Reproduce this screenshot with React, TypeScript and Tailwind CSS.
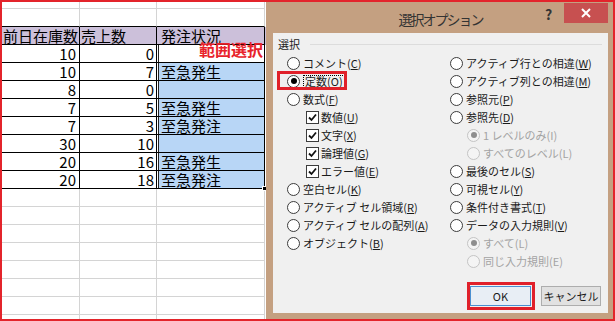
import React from "react";

const FONT = "font-['Noto_Sans_CJK_JP','Noto_Sans',sans-serif]";

type Row = { a: string; b: string; c: string; sel: boolean };

const rows: Row[] = [
  { a: "10", b: "0", c: "", sel: false },
  { a: "10", b: "7", c: "至急発生", sel: true },
  { a: "8", b: "0", c: "", sel: true },
  { a: "7", b: "5", c: "至急発生", sel: true },
  { a: "7", b: "3", c: "至急発注", sel: true },
  { a: "30", b: "10", c: "", sel: true },
  { a: "20", b: "16", c: "至急発生", sel: true },
  { a: "20", b: "18", c: "至急発注", sel: true },
];

function GrayRow({ h = "h-[18px]", dark = false }: { h?: string; dark?: boolean }) {
  const b = dark ? "border-b-black" : "border-b-[#d4d4d4]";
  return (
    <div className={`flex ${h} shrink-0`}>
      <div className={`w-[80px] border-r border-b border-r-[#d4d4d4] ${b}`} />
      <div className={`w-[77px] border-r border-b border-r-[#d4d4d4] ${b}`} />
      <div className={`w-[108px] border-r border-b border-r-[#d4d4d4] ${b}`} />
    </div>
  );
}

function Sheet() {
  return (
    <div className="relative flex w-[266px] shrink-0 flex-col overflow-hidden bg-white text-[15px] leading-[17px] text-black">
      <GrayRow h="h-[9px]" />
      <GrayRow dark />
      <div className="flex h-[18px] shrink-0 bg-[#ccc0da]">
        <div className="w-[80px] border-r border-b border-black pl-[3px] whitespace-nowrap">前日在庫数</div>
        <div className="w-[77px] border-r border-b border-black pl-[1px]">売上数</div>
        <div className="w-[108px] border-r border-b border-black pl-[4px]">発注状況</div>
      </div>
      {rows.map((r, i) => (
        <div key={i} className="flex h-[18px] shrink-0">
          <div className="w-[80px] border-r border-b border-black pr-[3px] text-right">{r.a}</div>
          <div className="w-[77px] border-r border-b border-black pr-[2px] text-right">{r.b}</div>
          <div
            className={`w-[108px] border-r border-b border-black pl-[4px] shadow-[inset_1px_0_0_#fff,inset_2px_0_0_#222] ${
              r.sel ? "bg-[#b8d6f6]" : "bg-white"
            }`}
          >
            {r.c}
          </div>
        </div>
      ))}
      {Array.from({ length: 8 }).map((_, i) => (
        <GrayRow key={i} />
      ))}
      <div className="absolute left-[262px] top-[186px] h-[5px] w-[5px] border border-white bg-black" />
      <div className="absolute left-[199px] top-[40px] text-[16px] leading-[18px] font-bold text-[#e8232b]">範囲選択</div>
    </div>
  );
}

function Radio({ checked = false, disabled = false }: { checked?: boolean; disabled?: boolean }) {
  return (
    <span
      className={`flex h-[13px] w-[13px] shrink-0 items-center justify-center rounded-full border ${
        disabled ? "border-[#c4c4c4] bg-[#f4f4f4]" : "border-[#3c3c3c] bg-white"
      }`}
    >
      {checked && <span className={`h-[6px] w-[6px] rounded-full ${disabled ? "bg-[#8e8e8e]" : "bg-black"}`} />}
    </span>
  );
}

function Check() {
  return (
    <span className="flex h-[13px] w-[13px] shrink-0 items-center justify-center border border-[#3c3c3c] bg-white">
      <svg width="9" height="9" viewBox="0 0 9 9">
        <path d="M1 4.5 L3.5 7 L8 1.5" fill="none" stroke="#111" strokeWidth="1.8" />
      </svg>
    </span>
  );
}

type Item = {
  kind: "radio" | "check";
  label: string;
  k: string;
  checked?: boolean;
  disabled?: boolean;
  indent?: boolean;
  focus?: boolean;
};

const left: Item[] = [
  { kind: "radio", label: "コメント", k: "C" },
  { kind: "radio", label: "定数", k: "O", checked: true, focus: true },
  { kind: "radio", label: "数式", k: "F" },
  { kind: "check", label: "数値", k: "U", indent: true },
  { kind: "check", label: "文字", k: "X", indent: true },
  { kind: "check", label: "論理値", k: "G", indent: true },
  { kind: "check", label: "エラー値", k: "E", indent: true },
  { kind: "radio", label: "空白セル", k: "K" },
  { kind: "radio", label: "アクティブ セル領域", k: "R" },
  { kind: "radio", label: "アクティブ セルの配列", k: "A" },
  { kind: "radio", label: "オブジェクト", k: "B" },
];

const right: Item[] = [
  { kind: "radio", label: "アクティブ行との相違", k: "W" },
  { kind: "radio", label: "アクティブ列との相違", k: "M" },
  { kind: "radio", label: "参照元", k: "P" },
  { kind: "radio", label: "参照先", k: "D" },
  { kind: "radio", label: "1 レベルのみ", k: "I", checked: true, disabled: true, indent: true },
  { kind: "radio", label: "すべてのレベル", k: "L", disabled: true, indent: true },
  { kind: "radio", label: "最後のセル", k: "S" },
  { kind: "radio", label: "可視セル", k: "Y" },
  { kind: "radio", label: "条件付き書式", k: "T" },
  { kind: "radio", label: "データの入力規則", k: "V" },
  { kind: "radio", label: "すべて", k: "L", checked: true, disabled: true, indent: true },
  { kind: "radio", label: "同じ入力規則", k: "E", disabled: true, indent: true },
];

function Option({ it, sub }: { it: Item; sub: string }) {
  const text = (
    <span
      className={`whitespace-nowrap ${it.disabled ? "text-[#a3a3a3]" : "text-[#1a1a1a]"} ${
        it.focus ? "border border-dotted border-black px-[1px] leading-[11px]" : ""
      }`}
    >
      {it.label}(
      {it.disabled ? it.k : <span className="underline underline-offset-[1px]">{it.k}</span>})
    </span>
  );
  return (
    <div className={`flex h-[18px] items-center ${it.indent ? sub : ""} ${it.kind === "check" ? "gap-[2px]" : "gap-[3px]"}`}>
      {it.kind === "radio" ? <Radio checked={it.checked} disabled={it.disabled} /> : <Check />}
      {text}
    </div>
  );
}

function Dialog() {
  return (
    <div className="flex flex-1 flex-col bg-[#c4a081]">
      <div className="relative flex h-[33px] shrink-0 justify-center pt-[10px]">
        <span className="text-[14px] leading-[18px] tracking-[-2px] text-[#333]">選択オプション</span>
        <span className="absolute left-[279px] top-[5px] text-[14px] font-bold leading-[18px] text-[#333]">?</span>
        <div className="absolute left-[298px] top-[3px] flex h-[20px] w-[44px] items-center justify-center bg-[#c75050]">
          <svg width="10" height="10" viewBox="0 0 10 10">
            <path d="M1 1 L9 9 M9 1 L1 9" stroke="#fff" strokeWidth="2" />
          </svg>
        </div>
      </div>
      <div className="flex">
        <div className="w-[7px] shrink-0" />
        <div className="relative flex h-[280px] w-[335px] flex-col bg-[#f0f0f0] pt-[3px] text-[11px]">
          <div className="flex h-[16px] items-center pl-[5px] pr-[6px]">
            <span className="text-[#1a1a1a]">選択</span>
            <div className="ml-[10px] h-px flex-1 bg-[#dcdcdc]" />
          </div>
          <div className="mt-[2px] flex pl-[14px]">
            <div className="flex w-[163px] flex-col">
              {left.map((it, i) => (
                <Option key={i} it={it} sub="pl-[19px]" />
              ))}
            </div>
            <div className="flex flex-col">
              {right.map((it, i) => (
                <Option key={i} it={it} sub="pl-[17px]" />
              ))}
            </div>
          </div>
          <div className="mt-[16px] flex justify-end gap-[10px] pr-[7px]">
            <div className="flex h-[20px] w-[61px] items-center justify-center border border-[#4a8fd1] bg-[#e8eef5] text-[#1a1a1a]">OK</div>
            <div className="flex h-[20px] w-[60px] items-center justify-center border border-[#adadad] bg-[#e1e1e1] text-[#1a1a1a]">
              キャンセル
            </div>
          </div>
          <div className="pointer-events-none absolute left-[4px] top-[38px] h-[19px] w-[70px] border-[3px] border-[#e0202a]" />
          <div className="pointer-events-none absolute left-[194px] top-[249px] h-[28px] w-[68px] border-[3px] border-[#e0202a]" />
        </div>
      </div>
    </div>
  );
}

export default function App() {
  return (
    <div className={`relative flex h-[321px] w-[615px] overflow-hidden bg-white ${FONT}`}>
      <Sheet />
      <Dialog />
      <div className="pointer-events-none absolute inset-0 border-2 border-[#e3242b]" />
    </div>
  );
}
